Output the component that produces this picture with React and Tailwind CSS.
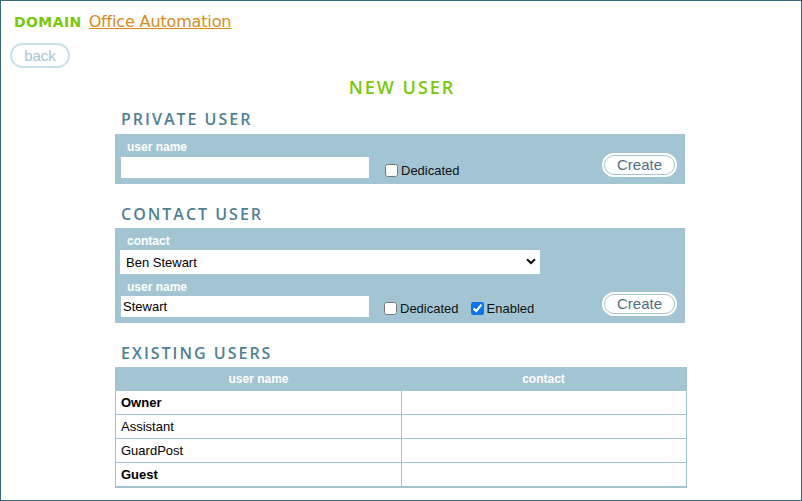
import { useState } from "react";

const users = [
  { name: "Owner", contact: "", bold: true },
  { name: "Assistant", contact: "", bold: false },
  { name: "GuardPost", contact: "", bold: false },
  { name: "Guest", contact: "", bold: true },
];

const heading = "text-[16px] font-semibold tracking-[2px] text-[#4f7f96] font-['Open_Sans',sans-serif] leading-none";

const CreateButton = () => (
  <button className="w-[71px] h-[20px] rounded-full bg-white border border-[#a3c5d3] shadow-[0_0_0_2px_#ffffff] text-[15px] text-[#4f6f80] font-['Liberation_Sans',sans-serif] leading-none">
    Create
  </button>
);

const Check = ({ label, checked, onChange }) => (
  <label className="flex items-center gap-[2px] text-[13px] text-[#111] font-['Liberation_Sans',sans-serif]">
    <input type="checkbox" checked={checked} onChange={onChange} className="w-[13px] h-[13px] m-0 accent-[#0a75e8]" />
    <span className="ml-[1px]">{label}</span>
  </label>
);

export default function App() {
  const [privDedicated, setPrivDedicated] = useState(false);
  const [contactDedicated, setContactDedicated] = useState(false);
  const [enabled, setEnabled] = useState(true);
  const [userName, setUserName] = useState("Stewart");

  return (
    <div className="w-[802px] h-[501px] border border-[#36687a] bg-white overflow-hidden font-['Liberation_Sans',sans-serif]">
      {/* top bar */}
      <div className="flex items-baseline gap-[7px] pl-[13px] pt-[9px]">
        <span className="text-[14px] font-bold text-[#7ac70c] font-['DejaVu_Sans',sans-serif] tracking-[0.4px]">DOMAIN</span>
        <a href="#" className="text-[16px] text-[#d98a1a] underline font-['DejaVu_Sans',sans-serif] tracking-[-0.15px]">Office Automation</a>
      </div>
      <div className="pl-[9px] pt-[9px]">
        <button className="w-[60px] h-[25px] rounded-full border-2 border-[#c8e0ea] text-[15px] text-[#a9c4d2] leading-none">back</button>
      </div>

      {/* main column */}
      <div className="w-[572px] mx-auto">
        <div className="text-center text-[18px] tracking-[2px] text-[#7ac70c] font-['Open_Sans',sans-serif] font-semibold leading-none mt-[10px] pl-[2px]">NEW USER</div>

        <div className={`${heading} mt-[15px] pl-[6px]`}>PRIVATE USER</div>
        <div className="mt-[7px] w-[570px] h-[50px] bg-[#a3c5d3] flex items-start pl-[6px] pr-[10px]">
          <div className="flex flex-col w-[248px]">
            <span className="text-[12px] font-bold text-white pl-[6px] pt-[7px] leading-none h-[23px]">user name</span>
            <input className="w-[248px] h-[21px] bg-white outline-none px-[3px] text-[13px]" />
          </div>
          <div className="mt-[27px] ml-[16px]">
            <Check label="Dedicated" checked={privDedicated} onChange={() => setPrivDedicated(!privDedicated)} />
          </div>
          <div className="ml-auto mt-[19px]">
            <CreateButton />
          </div>
        </div>

        <div className={`${heading} mt-[22px] pl-[6px]`}>CONTACT USER</div>
        <div className="mt-[6px] w-[570px] h-[95px] bg-[#a3c5d3] pl-[5px] pr-[10px]">
          <span className="block text-[12px] font-bold text-white pl-[7px] pt-[7px] leading-none h-[22px]">contact</span>
          <div className="relative w-[420px] h-[22px] bg-white">
            <select className="appearance-none w-full h-full bg-white outline-none pl-[6px] text-[13px] text-black">
              <option>Ben Stewart</option>
            </select>
            <svg className="absolute right-[4px] top-[8px]" width="10" height="7" viewBox="0 0 10 7">
              <path d="M1 1.2 L5 5 L9 1.2" fill="none" stroke="#111" strokeWidth="2" />
            </svg>
          </div>
          <div className="flex items-start">
            <div className="flex flex-col w-[249px]">
              <span className="text-[12px] font-bold text-white pl-[7px] pt-[9px] leading-none h-[24px]">user name</span>
              <input value={userName} onChange={(e) => setUserName(e.target.value)} className="ml-[1px] w-[248px] h-[21px] bg-white outline-none px-[2px] text-[13px] text-black" />
            </div>
            <div className="mt-[27px] ml-[15px] flex gap-[12px]">
              <Check label="Dedicated" checked={contactDedicated} onChange={() => setContactDedicated(!contactDedicated)} />
              <Check label="Enabled" checked={enabled} onChange={() => setEnabled(!enabled)} />
            </div>
            <div className="ml-auto mt-[20px]">
              <CreateButton />
            </div>
          </div>
        </div>

        <div className={`${heading} mt-[22px] pl-[6px]`}>EXISTING USERS</div>
        <table className="mt-[6px] w-[572px] border-collapse border border-b-2 border-[#a3c5d3] text-[13px] table-fixed">
          <thead>
            <tr className="bg-[#a3c5d3] h-[23px]">
              <th className="font-bold text-white text-[12px] w-1/2">user name</th>
              <th className="font-bold text-white text-[12px]">contact</th>
            </tr>
          </thead>
          <tbody>
            {users.map((u) => (
              <tr key={u.name} className="h-[24px]">
                <td className={`border border-[#a3c5d3] pl-[5px] text-black ${u.bold ? "font-bold" : ""}`}>{u.name}</td>
                <td className="border border-[#a3c5d3]">{u.contact}</td>
              </tr>
            ))}
          </tbody>
        </table>
      </div>
    </div>
  );
}
